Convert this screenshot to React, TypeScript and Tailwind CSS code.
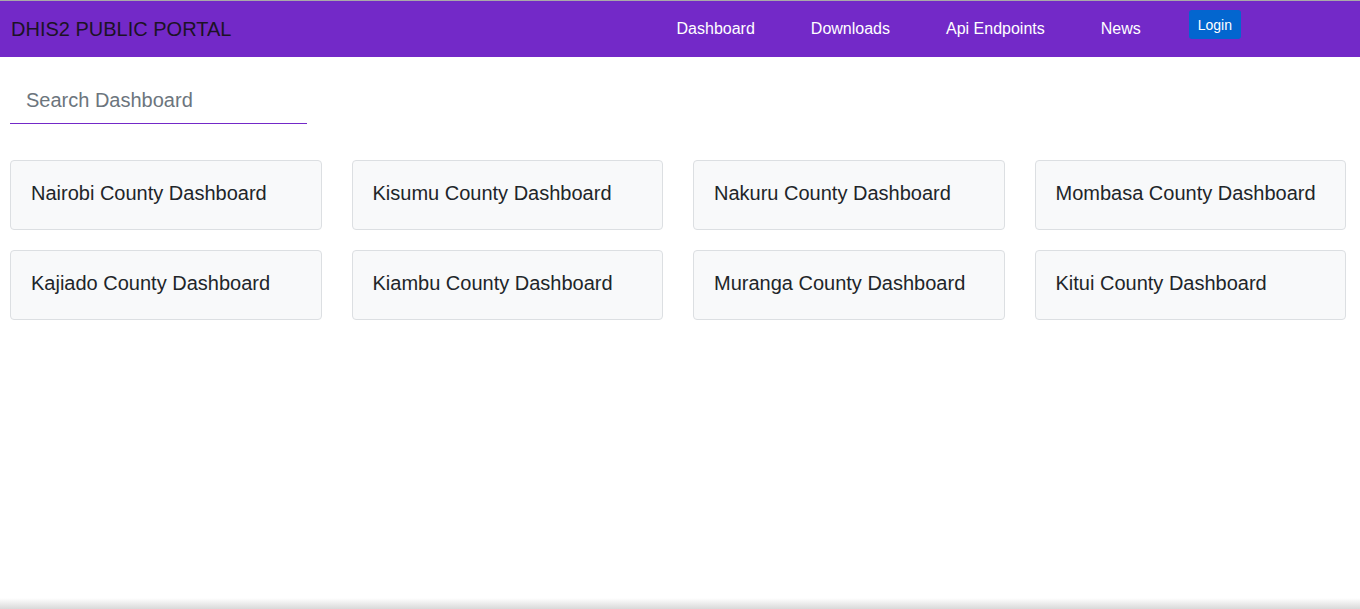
import React from "react";

const counties = [
  "Nairobi County Dashboard",
  "Kisumu County Dashboard",
  "Nakuru County Dashboard",
  "Mombasa County Dashboard",
  "Kajiado County Dashboard",
  "Kiambu County Dashboard",
  "Muranga County Dashboard",
  "Kitui County Dashboard",
];

export default function App() {
  return (
    <div
      className="h-[609px] flex flex-col bg-white overflow-hidden"
      style={{ fontFamily: '"Liberation Sans", Arial, sans-serif' }}
    >
      <header className="h-[57px] shrink-0 border-t border-[#a9a9a9] bg-[#7329c8] flex items-center">
        <div className="pl-[11px] text-[20px] text-[#1c1325] leading-none">DHIS2 PUBLIC PORTAL</div>
        <nav className="ml-auto flex items-center mr-[119px]">
          <a className="px-[28px] text-[16px] text-white leading-none">Dashboard</a>
          <a className="px-[28px] text-[16px] text-white leading-none">Downloads</a>
          <a className="px-[28px] text-[16px] text-white leading-none">Api Endpoints</a>
          <a className="px-[28px] text-[16px] text-white leading-none">News</a>
          <button className="ml-[20px] -mt-[9px] h-[29px] px-[9px] rounded-[3px] bg-[#0366cf] text-white text-[14px] leading-none">
            Login
          </button>
        </nav>
      </header>

      <div className="pl-[10px] pt-[20px]">
        <input
          placeholder="Search Dashboard"
          className="w-[297px] h-[47px] pl-[16px] text-[20px] text-[#495057] placeholder:text-[#6c757d] border-b border-[#7329c8] outline-none"
        />
      </div>

      <div className="pl-[10px] pr-[14px] pt-[36px] grid grid-cols-4 gap-x-[30px] gap-y-[20px]">
        {counties.map((c) => (
          <div
            key={c}
            className="h-[70px] flex items-center px-[20px] pb-[4px] bg-[#f8f9fa] border border-[#dcdfe2] rounded-[4px] text-[20px] text-[#212529]"
          >
            {c}
          </div>
        ))}
      </div>

      <div className="flex-1" />
      <div className="h-[11px] shrink-0 bg-gradient-to-b from-white to-[#d9d9d9]" />
    </div>
  );
}
